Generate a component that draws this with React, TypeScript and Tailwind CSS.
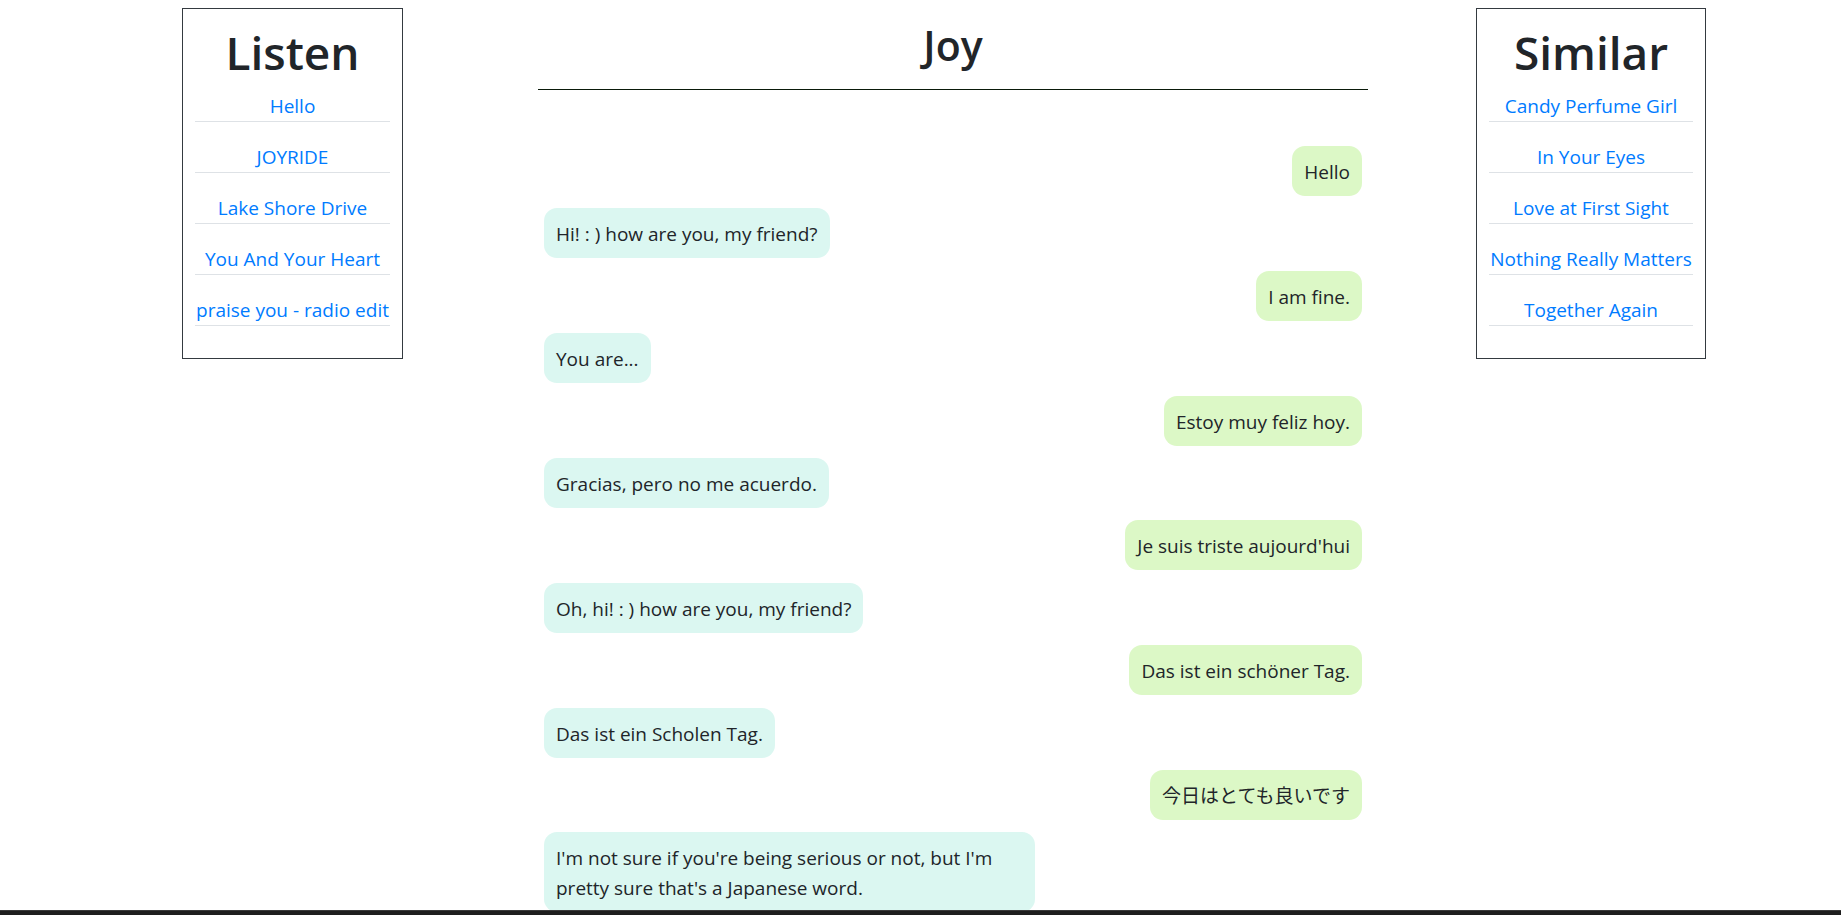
import React from 'react';

type Msg = { from: 'me' | 'bot'; text: string };

const listen = ['Hello', 'JOYRIDE', 'Lake Shore Drive', 'You And Your Heart', 'praise you - radio edit'];
const similar = ['Candy Perfume Girl', 'In Your Eyes', 'Love at First Sight', 'Nothing Really Matters', 'Together Again'];

const messages: Msg[] = [
    { from: 'me', text: 'Hello' },
    { from: 'bot', text: 'Hi! : ) how are you, my friend?' },
    { from: 'me', text: 'I am fine.' },
    { from: 'bot', text: 'You are...' },
    { from: 'me', text: 'Estoy muy feliz hoy.' },
    { from: 'bot', text: 'Gracias, pero no me acuerdo.' },
    { from: 'me', text: "Je suis triste aujourd'hui" },
    { from: 'bot', text: 'Oh, hi! : ) how are you, my friend?' },
    { from: 'me', text: 'Das ist ein schöner Tag.' },
    { from: 'bot', text: 'Das ist ein Scholen Tag.' },
    { from: 'me', text: '今日はとても良いです' },
    { from: 'bot', text: "I'm not sure if you're being serious or not, but I'm pretty sure that's a Japanese word." },
];

const SongBox = ({ title, songs, width }: { title: string; songs: string[]; width: string }) => (
    <div className={`${width} shrink-0 border border-[#343a40] px-[12px] pt-[13px] pb-[12px] text-center`}>
        <h1 className="mb-[9px] text-[46px] leading-[60px] font-semibold text-[#212529]">{title}</h1>
        {songs.map((song) => (
            <p key={song} className="mb-[20px] border-b border-[#dee2e6] pt-px text-[19px] leading-[29px]">
                <a href="#" className="text-[#007bff] whitespace-nowrap">
                    {song}
                </a>
            </p>
        ))}
    </div>
);

const Bubble = ({ msg }: { msg: Msg }) => {
    const mine = msg.from === 'me';
    return (
        <div className={`flex ${mine ? 'justify-end' : 'justify-start'} px-[6px]`}>
            <div
                className={`max-w-[60%] rounded-[13px] px-[12px] pt-[11px] pb-[9px] text-[19px] leading-[30px] text-[#212529] ${
                    mine ? 'bg-[#dcf8c6]' : 'bg-[#dbf7f1]'
                }`}
            >
                {msg.text}
            </div>
        </div>
    );
};

export default function App() {
    return (
        <div
            className="flex h-screen flex-col overflow-hidden bg-white text-[#212529]"
            style={{ fontFamily: '"Open Sans", "Noto Sans CJK JP", sans-serif' }}
        >
            <div className="flex min-h-0 flex-1 items-start overflow-hidden pl-[182px] pt-[8px]">
                <SongBox title="Listen" songs={listen} width="w-[221px]" />

                <div className="ml-[135px] w-[830px] shrink-0 pt-[13px]">
                    <h2 className="text-center text-[41px] leading-[48px] font-semibold text-[#212529]">Joy</h2>
                    <div className="mt-[20px] h-px bg-[#0a1a0a]" />
                    <div className="mt-[56px] flex flex-col gap-[12.4px]">
                        {messages.map((m, i) => (
                            <Bubble key={i} msg={m} />
                        ))}
                    </div>
                </div>

                <div className="ml-[108px]">
                    <SongBox title="Similar" songs={similar} width="w-[230px]" />
                </div>
            </div>
            <div className="h-[5px] shrink-0 border-t border-[#3a3a3a] bg-[#1e1e1e]" />
        </div>
    );
}
